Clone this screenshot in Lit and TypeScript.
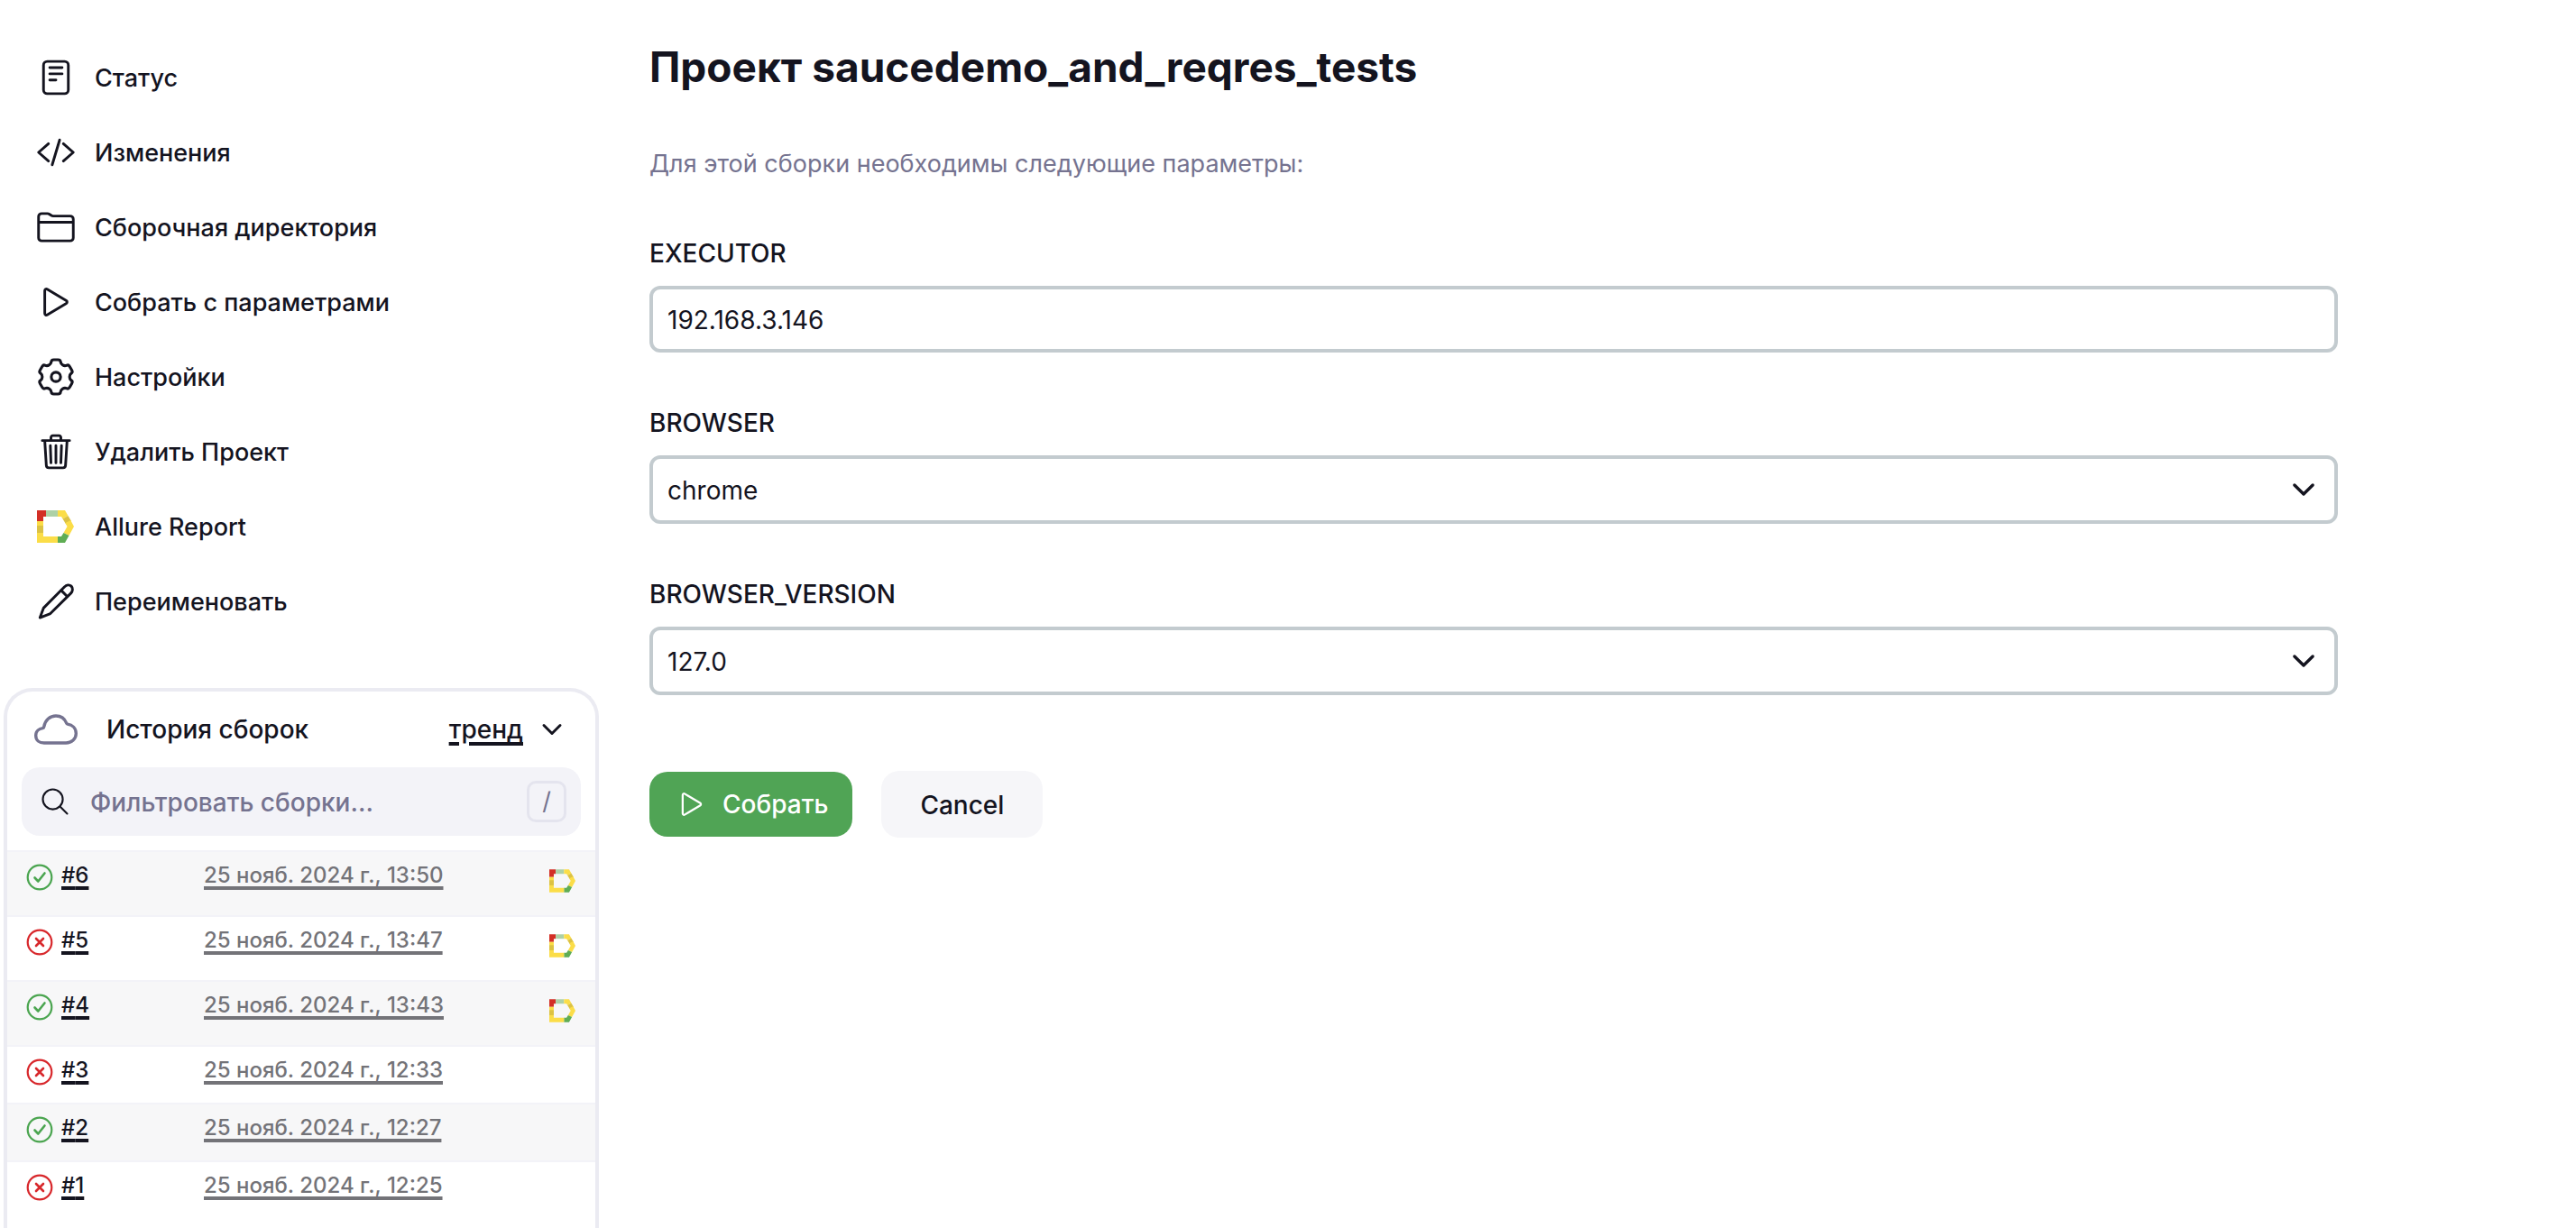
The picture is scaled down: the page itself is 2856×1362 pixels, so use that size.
import { LitElement, html, svg, css } from "lit";
import { customElement, state } from "lit/decorators.js";

const stroke = (width: number, body: unknown, cls = "icon") => svg`
  <svg class=${cls} viewBox="0 0 512 512" fill="none" stroke="currentColor" stroke-width=${width}
    stroke-linecap="round" stroke-linejoin="round" aria-hidden="true">${body}</svg>`;

/** Outline of a six-tooth gear centred in a 512 unit box. */
const gearPath = () => {
  const p = (r: number, deg: number) => {
    const a = (deg * Math.PI) / 180;
    return `${(256 + r * Math.cos(a)).toFixed(1)} ${(256 + r * Math.sin(a)).toFixed(1)}`;
  };
  let d = `M${p(176, -120)}`;
  for (let a = -90; a < 270; a += 60) {
    d += `Q${p(178, a - 21)} ${p(203, a - 17)}Q${p(228, a - 15)} ${p(222, a - 7)}L${p(222, a + 7)}`;
    d += `Q${p(228, a + 15)} ${p(203, a + 17)}Q${p(178, a + 21)} ${p(176, a + 30)}`;
  }
  return d + "Z";
};

const documentIcon = stroke(34, svg`
  <rect x="96" y="48" width="320" height="416" rx="48"/>
  <path d="M176 128h160M176 208h160M176 288h80"/>`);
const codeIcon = stroke(34, svg`<path d="M160 368L32 256l128-112M352 368l128-112-128-112M304 96l-96 320"/>`);
const folderIcon = stroke(34, svg`
  <path d="M440 432H72a40 40 0 01-40-40V120a40 40 0 0140-40h75.890a40 40 0 0122.190 6.720l27.840 18.560a40 40 0 0022.190 6.720H440a40 40 0 0140 40v240a40 40 0 01-40 40zM32 192h448"/>`);
const playBody = svg`<path d="M112 111v290c0 17.440 17 28.520 31 20.160l247.900-148.370c12.120-7.250 12.120-26.330 0-33.580L143 90.840c-14-8.360-31 2.720-31 20.160z"/>`;
const gearIcon = stroke(36, svg`<path d=${gearPath()}/><circle cx="256" cy="256" r="60"/>`);
const trashIcon = stroke(34, svg`
  <path d="M112 112l20 320c.950 18.490 14.400 32 32 32h184c17.670 0 30.870-13.510 32-32l20-320M80 112h352M192 112V72a23.930 23.930 0 0124-24h80a23.930 23.930 0 0124 24v40M256 176v224M184 176l8 224M328 176l-8 224"/>`);
const pencilIcon = stroke(34, svg`
  <path d="M50 466L96 342 368 68C390 42 430 36 454 60s20 66-4 90L184 414z"/><path d="M325 115l76 76"/>`);
const cloudIcon = stroke(36, svg`
  <path d="M100.180 241.190a15.930 15.930 0 0013.370-13.250C126.600 145.590 186.340 96 256 96c64.690 0 107.790 42.360 124.920 87a16.110 16.110 0 0012.530 10.180C449.360 202.060 494 239.210 494 304c0 66-52 112-118 112H116c-55 0-98-27.440-98-88 0-54.430 41.890-80.810 82.180-86.810z"/>`, "cloud");
const searchBody = svg`<circle cx="221" cy="221" r="157"/><path d="M338 338l110 110"/>`;
const chevronBody = svg`<path d="M112 184l144 144 144-144"/>`;

const allure = (cls: string, box: string) => svg`
  <svg class=${cls} viewBox=${box} aria-hidden="true">
    <path fill="#d32f26" d="M0 0h10v7H7v5H0z"/>
    <path fill="#add1a6" d="M10 0h13v7H10z"/>
    <path fill="#fbdd48" d="M23 0h8l3.500 6-6 3.500L27 7h-4z"/>
    <path fill="#dcc243" d="M34.500 6l3.500 6-5.500 4-4-6.500z"/>
    <path fill="#fbdd48" d="M37.300 11L41 18l-5.500 10-6-3 4-7-2-4z"/>
    <path fill="#5fad54" d="M29.500 25l6 3L31 36h-8v-7h4z"/>
    <path fill="#fbdd48" d="M0 12h7v17h16v7H0z"/>
    <path fill="#dcc243" d="M0 17h7v8H0z"/>
  </svg>`;

const navItems = [
  { label: "Статус", icon: documentIcon },
  { label: "Изменения", icon: codeIcon },
  { label: "Сборочная директория", icon: folderIcon },
  { label: "Собрать с параметрами", icon: stroke(34, playBody) },
  { label: "Настройки", icon: gearIcon },
  { label: "Удалить Проект", icon: trashIcon },
  { label: "Allure Report", icon: allure("icon", "-1 -4 44 44") },
  { label: "Переименовать", icon: pencilIcon },
];

const builds = [
  { id: 6, ok: true, date: "25 нояб. 2024 г., 13:50", report: true },
  { id: 5, ok: false, date: "25 нояб. 2024 г., 13:47", report: true },
  { id: 4, ok: true, date: "25 нояб. 2024 г., 13:43", report: true },
  { id: 3, ok: false, date: "25 нояб. 2024 г., 12:33", report: false },
  { id: 2, ok: true, date: "25 нояб. 2024 г., 12:27", report: false },
  { id: 1, ok: false, date: "25 нояб. 2024 г., 12:25", report: false },
];

const base = css`
  * { box-sizing: border-box; }
  a { color: inherit; }
  button, input, select { font: inherit; color: inherit; margin: 0; }
`;

@customElement("side-nav")
class SideNav extends LitElement {
  static styles = [base, css`
    :host { display: block; }
    .nav { display: flex; flex-direction: column; padding: 44px 0 0 40px; font-size: 27px; }
    .item { display: flex; align-items: center; gap: 21px; height: 83px; font-weight: 500; text-decoration: none; }
    .icon { width: 44px; height: 44px; flex: none; }
    .text { padding-top: 2px; }
  `];
  render() {
    return html`<nav class="nav">
      ${navItems.map((i) => html`<a class="item" href="#">${i.icon}<span class="text">${i.label}</span></a>`)}
    </nav>`;
  }
}

@customElement("build-history")
class BuildHistory extends LitElement {
  @state() private query = "";
  static styles = [base, css`
    :host { display: flex; flex-direction: column; }
    .card { flex: 1; border: 4px solid #ebebf2; border-bottom: 0; border-radius: 32px 32px 0 0; }
    .head { display: flex; align-items: center; height: 84px; padding: 0 32px 0 30px; font-weight: 500; }
    .cloud { width: 48px; height: 48px; color: #757390; }
    .title { margin: 0 auto 0 32px; font-size: inherit; font-weight: inherit; }
    .trend { text-decoration-thickness: 4px; text-underline-offset: 4px; }
    .fold { display: flex; padding: 0; margin-left: 16px; border: 0; background: none; }
    .chevron { width: 32px; height: 32px; }
    .search { display: flex; align-items: center; height: 76px; margin: 0 16px 16px; padding: 0 16px 0 19px; border-radius: 20px; background: #f3f3f8; }
    .glass { width: 36px; height: 36px; flex: none; }
    .query { flex: 1; min-width: 0; margin-left: 21px; padding: 2px 0 0; border: 0; outline: 0; background: none; font-weight: 500; }
    .query::placeholder { color: #757390; opacity: 1; }
    .key { display: grid; place-items: center; width: 44px; height: 46px; border: 3px solid #e4e4ee; border-radius: 10px; color: #757390; font: inherit; font-size: 27px; line-height: 36px; }
    .table { width: 100%; border-collapse: collapse; font-size: 24px; line-height: 28px; font-weight: 500; }
    .row { height: 64px; vertical-align: top; }
    .row.tall { height: 72px; }
    .row:nth-child(odd) { background: #f7f7f8; }
    .cell { padding: 12px 0 0; border-top: 2px solid #f3f3f8; text-align: left; }
    .cell.first { width: 218px; padding-left: 21px; }
    .cell.last { width: 51px; padding-top: 19px; }
    .build { display: flex; align-items: flex-start; gap: 9px; }
    .status { width: 30px; height: 30px; margin-top: 1px; flex: none; }
    .status.ok { color: #4ba550; }
    .status.bad { color: #d8282c; }
    .link { text-decoration-thickness: 4px; text-underline-offset: 4px; }
    .date { color: #737378; }
    .report { display: block; width: 29px; height: 26px; }
  `];
  render() {
    const shown = builds.filter((b) => `#${b.id} ${b.date}`.includes(this.query));
    return html`<section class="card">
      <div class="head">
        ${cloudIcon}
        <h2 class="title">История сборок</h2>
        <a class="trend" href="#">тренд</a>
        <button class="fold" type="button" aria-label="Свернуть">${stroke(48, chevronBody, "chevron")}</button>
      </div>
      <label class="search">
        ${stroke(30, searchBody, "glass")}
        <input class="query" type="text" placeholder="Фильтровать сборки..." .value=${this.query}
          @input=${(e: Event) => (this.query = (e.target as HTMLInputElement).value)} />
        <kbd class="key">/</kbd>
      </label>
      <table class="table"><tbody>
        ${shown.map((b) => html`<tr class="row ${b.report ? "tall" : ""}">
          <td class="cell first"><div class="build">
            <svg class="status ${b.ok ? "ok" : "bad"}" viewBox="0 0 30 30" fill="none" stroke="currentColor"
              stroke-width="2.200" stroke-linecap="round" stroke-linejoin="round" aria-hidden="true">
              <circle cx="15" cy="15" r="13.300"/>
              <path stroke-width="2.600" d=${b.ok ? "M9.500 15.500l3.800 4L20.500 10.500" : "M11 11l8 8M19 11l-8 8"}/>
            </svg>
            <a class="link" href="#">#${b.id}</a>
          </div></td>
          <td class="cell"><a class="link date" href="#">${b.date}</a></td>
          <td class="cell last">${b.report ? html`<a href="#" aria-label="Allure Report">${allure("report", "0 0 41 36")}</a>` : ""}</td>
        </tr>`)}
      </tbody></table>
    </section>`;
  }
}

@customElement("build-form")
class BuildForm extends LitElement {
  static styles = [base, css`
    :host { display: block; }
    .title { margin: 0; font-size: 46px; line-height: 60px; font-weight: 700; }
    .note { margin: 60px 0 0; font-size: 27px; line-height: 36px; color: #757390; }
    .form { display: flex; flex-direction: column; }
    .field { display: flex; flex-direction: column; margin-top: 63px; }
    .field + .field { margin-top: 60px; }
    .label { line-height: 36px; margin-bottom: 18px; font-weight: 500; }
    .input { width: 100%; height: 74px; padding: 2px 16px 0; border: 4px solid #c3cbcf; border-radius: 12px; background: #fff; outline: 0; }
    .pick { display: grid; }
    .select { grid-area: 1 / 1; height: 76px; appearance: none; }
    .arrow { grid-area: 1 / 1; place-self: center end; width: 36px; height: 36px; margin-right: 20px; pointer-events: none; }
    .actions { display: flex; align-items: center; gap: 32px; margin-top: 84px; }
    .button { display: flex; align-items: center; height: 74px; padding: 2px 43px 0; border: 0; border-radius: 20px; background: #f6f6f9; font-weight: 500; }
    .button.primary { height: 72px; padding: 0 27px 0 29px; gap: 16px; background: #50a455; color: #fff; }
    .play { width: 36px; height: 36px; }
  `];
  private select(name: string, options: string[]) {
    return html`<div class="field">
      <label class="label" for=${name}>${name}</label>
      <div class="pick">
        <select class="input select" id=${name} name=${name}>${options.map((o) => html`<option>${o}</option>`)}</select>
        ${stroke(48, chevronBody, "arrow")}
      </div>
    </div>`;
  }
  render() {
    return html`
      <h1 class="title">Проект saucedemo_and_reqres_tests</h1>
      <p class="note">Для этой сборки необходимы следующие параметры:</p>
      <form class="form" @submit=${(e: Event) => e.preventDefault()}>
        <div class="field">
          <label class="label" for="EXECUTOR">EXECUTOR</label>
          <input class="input" id="EXECUTOR" name="EXECUTOR" type="text" value="192.168.3.146" />
        </div>
        ${this.select("BROWSER", ["chrome"])}
        ${this.select("BROWSER_VERSION", ["127.0"])}
        <div class="actions">
          <button class="button primary" type="submit">${stroke(32, playBody, "play")}<span>Собрать</span></button>
          <button class="button" type="button">Cancel</button>
        </div>
      </form>`;
  }
}

@customElement("app-root")
class AppRoot extends LitElement {
  static styles = css`
    :host { display: block; font: 400 28px/36px Inter, "Liberation Sans", sans-serif; color: #14141f; background: #fff; }
    .page { display: grid; grid-template-columns: 660px minmax(0, 1fr); column-gap: 56px; min-height: 100vh; padding: 0 264px 0 4px; }
    .side { display: flex; flex-direction: column; margin-left: -4px; }
    .nav { margin-bottom: 55px; }
    .history { flex: 1; margin-left: 4px; }
    .main { padding-top: 44px; }
  `;
  render() {
    return html`<div class="page">
      <div class="side"><side-nav class="nav"></side-nav><build-history class="history"></build-history></div>
      <main class="main"><build-form></build-form></main>
    </div>`;
  }
}
